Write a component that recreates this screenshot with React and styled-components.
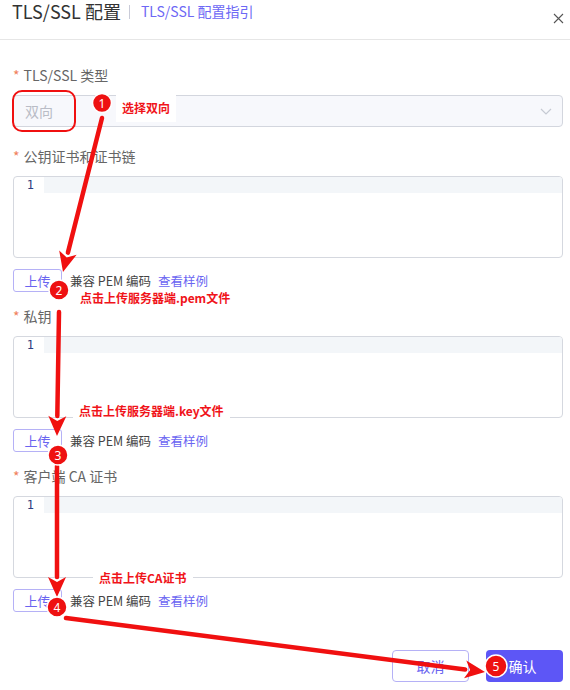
import React from 'react';
import styled, { createGlobalStyle } from 'styled-components';

const GlobalStyle = createGlobalStyle`
    html, body {
        margin: 0;
        padding: 0;
        background: #fff;
    }
    body {
        font-family: "Noto Sans CJK SC", "Noto Sans", sans-serif;
        color: #333;
    }
`;

const Modal = styled.div`
    position: relative;
    width: 570px;
    height: 690px;
    overflow: hidden;
    background: #fff;
`;

const Header = styled.div`
    display: flex;
    align-items: flex-start;
    height: 40px;
    box-sizing: border-box;
    padding: 1px 6px 0 12px;
    border-bottom: 1px solid #e6e6e6;
    .title {
        font-size: 18px;
        line-height: 20px;
        color: #333;
    }
    .divider {
        width: 1px;
        height: 14px;
        margin: 4px 11px 0 8px;
        background: #c9cbd8;
    }
    .guide {
        font-size: 14px;
        line-height: 20px;
        color: #6d68f5;
    }
    .close {
        margin-left: auto;
        margin-top: 4px;
        color: #555;
    }
`;

const Body = styled.div`
    padding: 24px 7px 0 13px;
`;

const FormItem = styled.div`
    margin-bottom: ${(p) => p.gap || 13}px;
`;

const Label = styled.div`
    height: 22px;
    line-height: 22px;
    margin-bottom: 9px;
    font-size: 14px;
    color: #666;
    .req {
        color: #f0805a;
        margin-right: 4px;
    }
`;

const Select = styled.div`
    display: flex;
    align-items: center;
    justify-content: space-between;
    height: 32px;
    box-sizing: border-box;
    padding: 0 10px 0 11px;
    background: #f7f8fc;
    border: 1px solid #d3d6de;
    border-radius: 4px;
    font-size: 14px;
    color: #b9bcc6;
`;

const Editor = styled.div`
    height: 82px;
    box-sizing: border-box;
    border: 1px solid #d5d8df;
    border-radius: 4px;
    display: flex;
    align-items: flex-start;
    overflow: hidden;
`;

const Gutter = styled.div`
    width: 30px;
    flex: none;
    padding-right: 10px;
    box-sizing: border-box;
    text-align: right;
    font-family: "DejaVu Sans Mono", monospace;
    font-size: 12px;
    line-height: 16px;
    color: #2c3e80;
`;

const ActiveLine = styled.div`
    flex: 1;
    height: 16px;
    background: #f3f6f9;
`;

const UploadRow = styled.div`
    display: flex;
    align-items: center;
    margin-top: 11px;
    font-size: 12.5px;
    color: #444;
    .hint {
        margin-left: 8px;
    }
    .sample {
        margin-left: 7px;
        color: #6b66f2;
    }
`;

const OutlineButton = styled.button`
    height: ${(p) => p.h || 23}px;
    width: ${(p) => p.w || 49}px;
    padding: 0;
    background: #fff;
    border: 1px solid #b5b1f6;
    border-radius: ${(p) => p.r || 3}px;
    font-family: inherit;
    font-size: ${(p) => p.fs || 13}px;
    color: #6a64f0;
`;

const Footer = styled.div`
    display: flex;
    justify-content: flex-end;
    gap: 17px;
    margin-top: 38px;
`;

const PrimaryButton = styled.button`
    height: 32px;
    width: 77px;
    padding: 0 4px 0 0;
    background: #5d56f6;
    border: none;
    border-radius: 4px;
    font-family: inherit;
    font-size: 14px;
    color: #fff;
`;

/* hand-drawn guide marks on top of the form */
const Marks = styled.svg`
    position: absolute;
    left: 0;
    top: 0;
    pointer-events: none;
`;

const Note = styled.div`
    position: absolute;
    left: ${(p) => p.x}px;
    top: ${(p) => p.y}px;
    padding: ${(p) => p.pad || '3px 6px'};
    background: #fff;
    font-size: 12px;
    line-height: 14px;
    font-weight: bold;
    color: #f0141a;
    white-space: nowrap;
`;

const Chevron = () => (
    <svg width="12" height="7" viewBox="0 0 12 7">
        <path d="M1 1l5 5 5-5" fill="none" stroke="#c6cad3" strokeWidth="1.2" />
    </svg>
);

const CloseIcon = () => (
    <svg width="11" height="11" viewBox="0 0 11 11">
        <path d="M1 1l9 9M10 1l-9 9" stroke="#555" strokeWidth="1.1" />
    </svg>
);

const Arrow = ({ x1, y1, x2, y2 }) => {
    const a = Math.atan2(y2 - y1, x2 - x1);
    const len = 20;
    const wing = 9;
    const bx = x2 - Math.cos(a) * len;
    const by = y2 - Math.sin(a) * len;
    const px = -Math.sin(a) * wing;
    const py = Math.cos(a) * wing;
    return (
        <g>
            <line x1={x1} y1={y1} x2={bx} y2={by} stroke="#f01010" strokeWidth="4.5" strokeLinecap="round" />
            <polygon
                points={`${x2},${y2} ${bx + px},${by + py} ${bx + Math.cos(a) * 5},${by + Math.sin(a) * 5} ${bx - px},${by - py}`}
                fill="#f01010"
            />
        </g>
    );
};

const Step = ({ cx, cy, n, r = 10 }) => (
    <g>
        <circle cx={cx} cy={cy} r={r} fill="#ee1111" stroke="#fff" strokeWidth="1.5" />
        <text
            x={cx}
            y={cy + 4.5}
            textAnchor="middle"
            fontSize="12"
            fill="#fff"
            fontFamily="Noto Sans, sans-serif"
        >
            {n}
        </text>
    </g>
);

const CertField = ({ label, gap }) => (
    <FormItem gap={gap}>
        <Label>
            <span className="req">*</span>
            {label}
        </Label>
        <Editor>
            <Gutter>1</Gutter>
            <ActiveLine />
        </Editor>
        <UploadRow>
            <OutlineButton>上传</OutlineButton>
            <span className="hint">兼容 PEM 编码</span>
            <span className="sample">查看样例</span>
        </UploadRow>
    </FormItem>
);

const App = () => {
    return (
        <Modal>
            <GlobalStyle />
            <Header>
                <span className="title">TLS/SSL 配置</span>
                <span className="divider" />
                <span className="guide">TLS/SSL 配置指引</span>
                <span className="close">
                    <CloseIcon />
                </span>
            </Header>
            <Body>
                <FormItem gap={18}>
                    <Label>
                        <span className="req">*</span>
                        TLS/SSL 类型
                    </Label>
                    <Select>
                        <span>双向</span>
                        <Chevron />
                    </Select>
                </FormItem>
                <CertField label="公钥证书和证书链" />
                <CertField label="私钥" />
                <CertField label="客户端 CA 证书" gap={0} />
                <Footer>
                    <OutlineButton w={77} h={32} r={4} fs={14}>
                        取消
                    </OutlineButton>
                    <PrimaryButton>确认</PrimaryButton>
                </Footer>
            </Body>

            <Note x={116} y={95} pad="6px 6px 7px">选择双向</Note>
            <Note x={74} y={291} pad="0 6px">点击上传服务器端.pem文件</Note>
            <Note x={73} y={402} pad="2px 6px 2px">点击上传服务器端.key文件</Note>
            <Note x={93} y={569} pad="2px 6px 2px">点击上传CA证书</Note>

            <Marks width="570" height="690" viewBox="0 0 570 690">
                <rect x="13" y="91" width="62" height="40" rx="9" fill="none" stroke="#f01010" strokeWidth="2" />
                <Arrow x1={102} y1={118} x2={63} y2={272} />
                <Arrow x1={59} y1={312} x2={57} y2={436} />
                <Arrow x1={57} y1={466} x2={57} y2={597} />
                <Arrow x1={66} y1={618} x2={485} y2={672} />
                <Step cx={102} cy={103} n="1" r={9.5} />
                <Step cx={59} cy={290} n="2" />
                <Step cx={58} cy={455} n="3" />
                <Step cx={57} cy={607} n="4" />
                <Step cx={496} cy={666} n="5" r={11} />
            </Marks>
        </Modal>
    );
};

export default App;
